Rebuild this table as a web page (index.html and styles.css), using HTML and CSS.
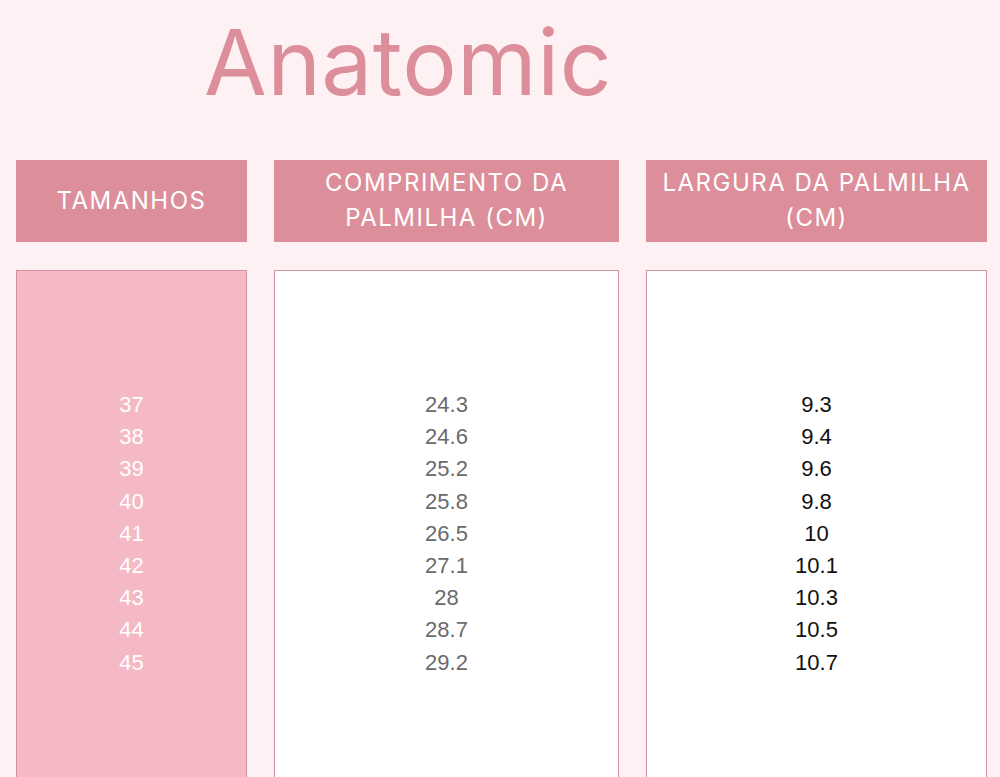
FILE: index.html
```html
<!DOCTYPE html>
<html lang="pt">
<head>
<meta charset="utf-8">
<title>Anatomic</title>
<link rel="stylesheet" href="styles.css">
</head>
<body>
<div class="page">
  <h1 class="title">Anatomic</h1>
  <div class="table">
    <div class="head">TAMANHOS</div>
    <div class="head">COMPRIMENTO DA<br>PALMILHA (CM)</div>
    <div class="head">LARGURA DA PALMILHA<br>(CM)</div>
    <div class="col col-sizes">
      <span>37</span><span>38</span><span>39</span><span>40</span><span>41</span><span>42</span><span>43</span><span>44</span><span>45</span>
    </div>
    <div class="col col-length">
      <span>24.3</span><span>24.6</span><span>25.2</span><span>25.8</span><span>26.5</span><span>27.1</span><span>28</span><span>28.7</span><span>29.2</span>
    </div>
    <div class="col col-width">
      <span>9.3</span><span>9.4</span><span>9.6</span><span>9.8</span><span>10</span><span>10.1</span><span>10.3</span><span>10.5</span><span>10.7</span>
    </div>
  </div>
</div>
</body>
</html>
```
FILE: styles.css
```css
html, body {
  margin: 0;
  padding: 0;
  background: #fef1f3;
  overflow: hidden;
}
.page {
  width: 1000px;
  height: 777px;
  overflow: hidden;
}
.title {
  margin: 0;
  padding: 12px 0 0 204px;
  height: 160px;
  box-sizing: border-box;
  font-family: Inter, "Noto Sans", sans-serif;
  font-weight: 400;
  font-size: 91px;
  line-height: 100px;
  color: #dd8e9b;
  letter-spacing: 0.4px;
}
.table {
  display: grid;
  grid-template-columns: 231px 345px 341px;
  grid-template-rows: 82px 540px;
  column-gap: 27px;
  row-gap: 28px;
  padding-left: 16px;
}
.head {
  background: #dc8e9a;
  color: #ffffff;
  font-family: Inter, "Noto Sans", sans-serif;
  font-size: 24px;
  line-height: 35px;
  letter-spacing: 1.5px;
  text-align: center;
  display: flex;
  align-items: center;
  justify-content: center;
  padding-bottom: 2px;
  box-sizing: border-box;
}
.col {
  border: 1px solid #d6939f;
  box-sizing: border-box;
  display: flex;
  flex-direction: column;
  align-items: center;
  padding-top: 118px;
  font-family: "Liberation Sans", Arial, sans-serif;
  font-size: 22px;
  line-height: 32.2px;
}
.col-sizes {
  background: #f4b9c4;
  color: #ffffff;
}
.col-length {
  background: #ffffff;
  color: #6b6b6b;
}
.col-width {
  background: #ffffff;
  color: #111111;
}
```
